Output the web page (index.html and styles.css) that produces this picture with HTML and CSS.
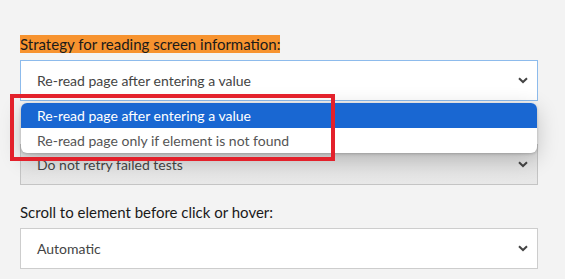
FILE: index.html
```html
<!DOCTYPE html>
<html lang="en">
<head>
    <meta charset="UTF-8">
    <title>Test settings</title>
    <link rel="stylesheet" href="styles.css">
</head>
<body>
    <div class="settings">
        <div class="field">
            <label class="field-label highlight">Strategy for reading screen information:</label>
            <div class="select-wrap">
                <div class="select select-focused">
                    <span>Re-read page after entering a value</span>
                    <svg class="chevron" viewBox="0 0 10 7" width="10" height="7"><path d="M1 1.2 L5 5 L9 1.2" fill="none" stroke="#444" stroke-width="2"/></svg>
                </div>
                <ul class="dropdown">
                    <li class="option option-selected">Re-read page after entering a value</li>
                    <li class="option">Re-read page only if element is not found</li>
                </ul>
            </div>
        </div>

        <div class="field">
            <!-- label covered by the open dropdown -->
            <div class="label-spacer"></div>
            <div class="select select-disabled">
                <span>Do not retry failed tests</span>
                <svg class="chevron" viewBox="0 0 10 7" width="10" height="7"><path d="M1 1.2 L5 5 L9 1.2" fill="none" stroke="#444" stroke-width="2"/></svg>
            </div>
        </div>

        <div class="field">
            <label class="field-label">Scroll to element before click or hover:</label>
            <div class="select">
                <span>Automatic</span>
                <svg class="chevron" viewBox="0 0 10 7" width="10" height="7"><path d="M1 1.2 L5 5 L9 1.2" fill="none" stroke="#444" stroke-width="2"/></svg>
            </div>
        </div>
    </div>

    <div class="annotation"></div>
</body>
</html>
```

FILE: styles.css
```css
* {
    margin: 0;
    padding: 0;
    box-sizing: border-box;
}

body {
    font-family: 'Lato', 'Open Sans', sans-serif;
    background: #f3f3f3;
    color: #222;
    width: 565px;
    height: 279px;
    overflow: hidden;
    position: relative;
}

.settings {
    padding: 35px 27px 0 20px;
    display: flex;
    flex-direction: column;
    gap: 18px;
}

.field {
    display: flex;
    flex-direction: column;
    align-items: flex-start;
    gap: 7px;
}

.field-label {
    font-size: 15px;
    line-height: 18px;
    color: #1a1a1a;
}

.label-spacer {
    height: 18px;
}

.highlight {
    background: #f7932f;
}

.select-wrap {
    position: relative;
    width: 100%;
}

.select {
    width: 100%;
    height: 41px;
    background: #fff;
    border: 1px solid #cdcdcd;
    display: flex;
    align-items: center;
    justify-content: space-between;
    padding: 0 9px 0 16px;
    font-size: 14px;
    color: #444;
}

.select-focused {
    border-color: #8dbbec;
}

.select-disabled {
    background: linear-gradient(#dedede, #e8e8e8);
    border-color: #c4c4c4;
}

.chevron {
    display: block;
}

.dropdown {
    position: absolute;
    top: 43px;
    left: 1px;
    right: 1px;
    list-style: none;
    background: #fff;
    border-radius: 6px;
    overflow: hidden;
    box-shadow: 0 6px 22px rgba(0, 0, 0, 0.2), 0 1px 3px rgba(0, 0, 0, 0.2);
    z-index: 2;
}

.option {
    height: 25px;
    line-height: 25px;
    padding-left: 16px;
    font-size: 14px;
    color: #555;
}

.option-selected {
    background: #1967d2;
    color: #fff;
}

.annotation {
    position: absolute;
    left: 10px;
    top: 94px;
    width: 325px;
    height: 67px;
    border: 4px solid #e3212b;
    z-index: 3;
}
```
